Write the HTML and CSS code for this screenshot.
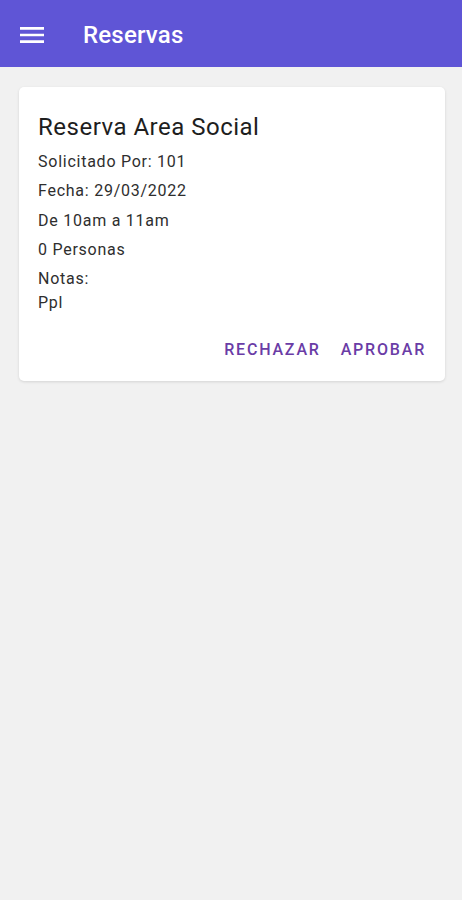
FILE: index.html
```html
<!DOCTYPE html>
<html lang="es">
<head>
  <meta charset="UTF-8">
  <meta name="viewport" content="width=device-width, initial-scale=1.0">
  <title>Reservas</title>
  <link rel="stylesheet" href="styles.css">
</head>
<body>
  <header class="app-bar">
    <svg class="menu-icon" width="32" height="32" viewBox="0 0 24 24">
      <path d="M3 18h18v-2H3v2zm0-5h18v-2H3v2zm0-7v2h18V6H3z" fill="#ffffff"/>
    </svg>
    <h1>Reservas</h1>
  </header>

  <main class="content">
    <div class="card">
      <h2>Reserva Area Social</h2>
      <p class="line">Solicitado Por: 101</p>
      <p class="line">Fecha: 29/03/2022</p>
      <p class="line">De 10am a 11am</p>
      <p class="line">0 Personas</p>
      <p class="notes">Notas:<br>Ppl</p>
      <div class="actions">
        <button>Rechazar</button>
        <button>Aprobar</button>
      </div>
    </div>
  </main>
</body>
</html>
```

FILE: styles.css
```css
body {
  font-family: Roboto, 'Noto Sans', sans-serif;
  margin: 0;
  background-color: #f1f1f1;
  min-height: 900px;
}
.app-bar {
  display: flex;
  align-items: center;
  height: 67px;
  background-color: #5f55d6;
  padding: 2px 0 0 16px;
  box-sizing: border-box;
}
.menu-icon {
  margin-right: 35px;
}
.app-bar h1 {
  margin: 0;
  color: #ffffff;
  font-size: 24px;
  font-weight: 500;
  letter-spacing: 0.2px;
}
.content {
  padding: 20px 17px 0 19px;
}
.card {
  background-color: #ffffff;
  border-radius: 5px;
  padding: 26px 19px 16px 19px;
  box-shadow: 0 1px 3px rgba(0, 0, 0, 0.12);
}
.card h2 {
  margin: 0 0 6px 0;
  font-size: 24px;
  font-weight: 400;
  letter-spacing: 0.5px;
  color: #1e1e1e;
}
.line {
  margin: 0;
  font-size: 16px;
  line-height: 29.3px;
  letter-spacing: 0.75px;
  color: #2e2e2e;
}
.notes {
  margin: 3px 0 0 0;
  font-size: 16px;
  line-height: 24px;
  letter-spacing: 0.75px;
  color: #2e2e2e;
}
.actions {
  display: flex;
  justify-content: flex-end;
  gap: 20px;
  margin-top: 20px;
}
button {
  background: none;
  border: none;
  padding: 5px 0 6px 0;
  font-family: inherit;
  font-size: 16px;
  font-weight: 500;
  letter-spacing: 1.8px;
  text-transform: uppercase;
  color: #6a3ca6;
  cursor: pointer;
}
```
